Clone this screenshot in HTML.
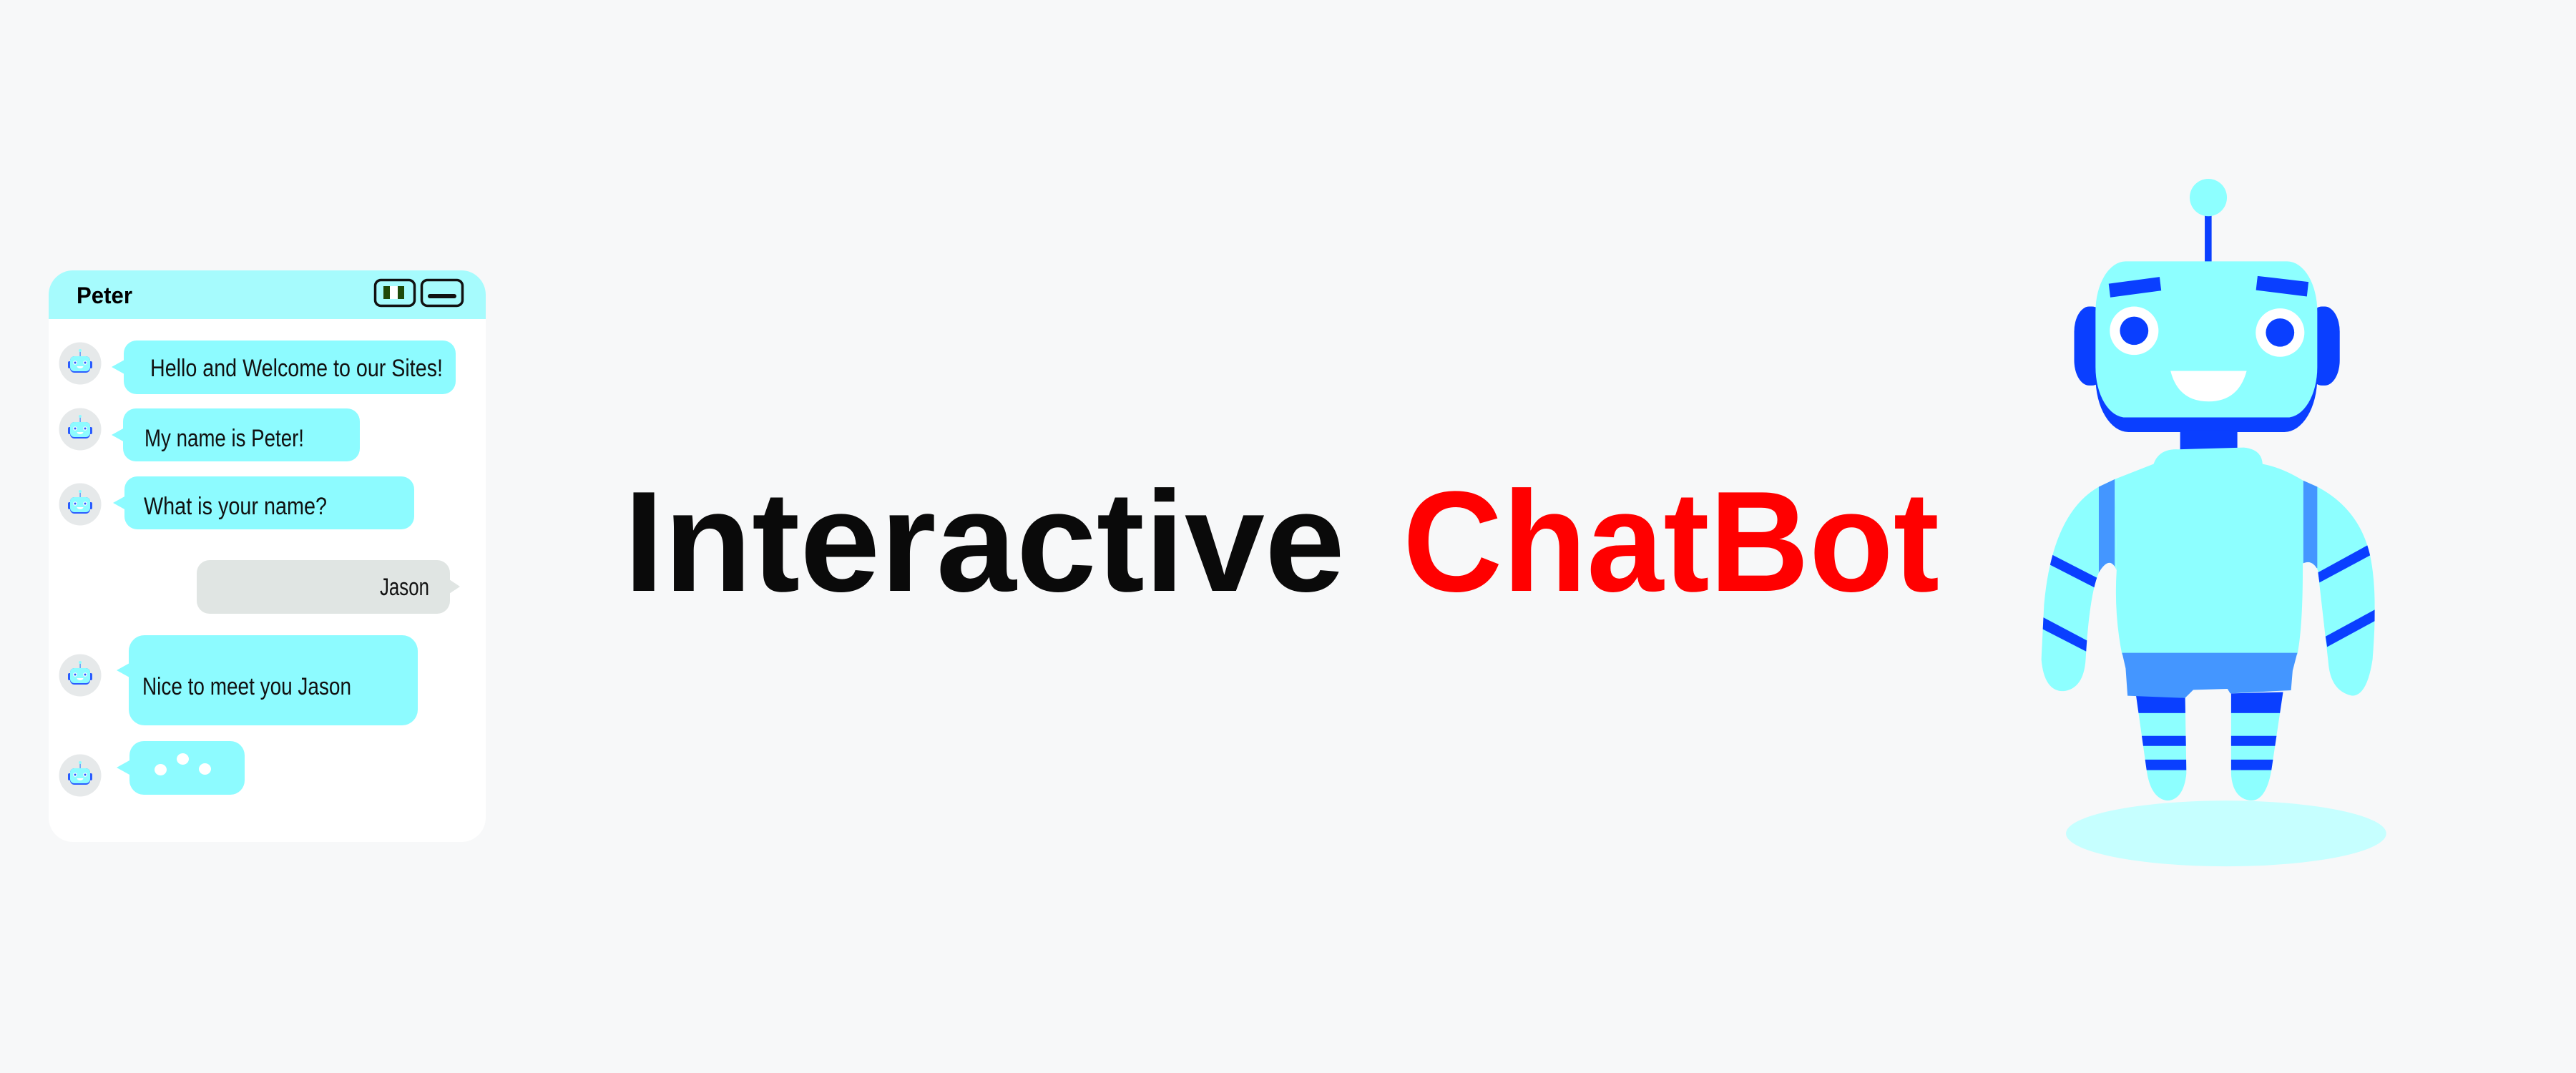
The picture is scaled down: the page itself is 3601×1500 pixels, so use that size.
<!DOCTYPE html>
<html><head><meta charset="utf-8">
<style>
html,body{margin:0;padding:0}
body{width:3601px;height:1500px;background:#f7f8f9;position:relative;overflow:hidden;font-family:"Liberation Sans",sans-serif}
.panel{position:absolute;left:68px;top:378px;width:611px;height:799px;background:#fff;border-radius:34px;overflow:hidden}
.hdr{position:absolute;left:0;top:0;width:611px;height:68px;background:#a6fbfd}
.av{position:absolute;left:82px;width:60px;height:60px}
.b{position:absolute;background:#8dfbff;border-radius:18px}
.tail{position:absolute;width:0;height:0;border-top:10px solid transparent;border-bottom:10px solid transparent}
.dot{position:absolute;width:17px;height:16px;border-radius:50%;background:#fff}
</style></head><body>

<div class="panel"><div class="hdr"></div></div>

<svg width="0" height="0" style="position:absolute">
<defs>
<symbol id="bot" viewBox="0 0 60 60">
  <ellipse cx="30" cy="30" rx="29.5" ry="29.5" fill="#e6e9ea"/>
  <rect x="29.5" y="12" width="1.2" height="8" fill="#3a8cff"/>
  <circle cx="30" cy="12" r="2" fill="#8dfbff"/>
  <rect x="13" y="27" width="5" height="10" rx="2" fill="#2a5cff"/>
  <rect x="42" y="27" width="5" height="10" rx="2" fill="#2a5cff"/>
  <rect x="16" y="20" width="28" height="23" rx="6" fill="#2a5cff"/>
  <rect x="16" y="20" width="28" height="21" rx="6" fill="#8dfbff"/>
  <circle cx="23" cy="29" r="2.8" fill="#fff"/><circle cx="23" cy="29" r="1.5" fill="#2a5cff"/>
  <circle cx="37" cy="29" r="2.8" fill="#fff"/><circle cx="37" cy="29" r="1.5" fill="#2a5cff"/>
  <path d="M25.5 34 h9 a4.5 3 0 0 1 -9 0z" fill="#fff"/>
</symbol>
</defs></svg>

<svg class="av" style="top:478px"><use href="#bot"/></svg>
<svg class="av" style="top:570px"><use href="#bot"/></svg>
<svg class="av" style="top:675px"><use href="#bot"/></svg>
<svg class="av" style="top:914px"><use href="#bot"/></svg>
<svg class="av" style="top:1054px"><use href="#bot"/></svg>

<div class="tail" style="left:156px;top:503px;border-right:18px solid #8dfbff"></div>
<div class="b" style="left:173px;top:476px;width:464px;height:75px"></div>
<div class="tail" style="left:156px;top:598px;border-right:18px solid #8dfbff"></div>
<div class="b" style="left:172px;top:571px;width:331px;height:74px"></div>
<div class="tail" style="left:158px;top:693px;border-right:18px solid #8dfbff"></div>
<div class="b" style="left:174px;top:666px;width:405px;height:74px"></div>
<div class="tail" style="left:628px;top:810px;border-left:15px solid #e0e5e3"></div>
<div class="b" style="left:275px;top:783px;width:354px;height:75px;background:#e0e5e3"></div>
<div class="tail" style="left:163px;top:927px;border-right:18px solid #8dfbff"></div>
<div class="b" style="left:180px;top:888px;width:404px;height:126px;border-radius:22px"></div>
<div class="tail" style="left:163px;top:1063px;border-right:18px solid #8dfbff"></div>
<div class="b" style="left:181px;top:1036px;width:161px;height:75px;border-radius:20px"></div>
<div class="dot" style="left:216px;top:1068px"></div>
<div class="dot" style="left:247px;top:1053px"></div>
<div class="dot" style="left:278px;top:1067px"></div>

<svg style="position:absolute;left:0;top:0" width="3601" height="1500">
  <!-- header -->
  <text x="107" y="424" font-family="Liberation Sans" font-weight="bold" font-size="32" fill="#000" textLength="78" lengthAdjust="spacingAndGlyphs">Peter</text>
  <rect x="524.5" y="391.5" width="55" height="36" rx="8" fill="none" stroke="#111" stroke-width="3.5"/>
  <rect x="536" y="400" width="9" height="18" fill="#1f4a0a"/>
  <rect x="545" y="400" width="11" height="18" fill="#fff"/>
  <rect x="556" y="400" width="9" height="18" fill="#1f4a0a"/>
  <rect x="589.5" y="391.5" width="57" height="36" rx="8" fill="none" stroke="#111" stroke-width="3.5"/>
  <line x1="601" y1="414" x2="635" y2="414" stroke="#111" stroke-width="6" stroke-linecap="round"/>
  <!-- messages -->
  <g font-family="Liberation Sans" font-size="34" fill="#111" lengthAdjust="spacingAndGlyphs">
    <text x="210" y="526" textLength="409" lengthAdjust="spacingAndGlyphs">Hello and Welcome to our Sites!</text>
    <text x="202" y="624" textLength="223" lengthAdjust="spacingAndGlyphs">My name is Peter!</text>
    <text x="201" y="719" textLength="256" lengthAdjust="spacingAndGlyphs">What is your name?</text>
    <text x="531" y="832" textLength="69" lengthAdjust="spacingAndGlyphs">Jason</text>
    <text x="199" y="971" textLength="292" lengthAdjust="spacingAndGlyphs">Nice to meet you Jason</text>
  </g>

  <text x="872" y="826" font-family="Liberation Sans" font-weight="bold" font-size="200" fill="#0a0a0a" textLength="1008" lengthAdjust="spacingAndGlyphs">Interactive</text>
  <text x="1961" y="826" font-family="Liberation Sans" font-weight="bold" font-size="200" fill="#ff0000" textLength="750" lengthAdjust="spacingAndGlyphs">ChatBot</text>

  <g transform="translate(2800,220) scale(0.3827,0.6378)">
    <defs>
      <clipPath id="la"><path d="M410,705 L350,722 Q180,780 150,980 L140,1100 Q150,1170 220,1170 Q295,1165 302,1100 Q315,960 350,910 Q390,870 415,905 Z"/></clipPath>
      <clipPath id="ra"><path d="M1095,708 L1148,722 Q1300,770 1340,870 Q1370,950 1350,1100 Q1330,1180 1275,1180 Q1195,1170 1188,1105 L1150,905 Q1130,880 1095,890 Z"/></clipPath>
      <clipPath id="ll"><path d="M485,1175 L665,1175 L670,1350 Q660,1408 600,1410 Q540,1405 525,1345 Z"/></clipPath>
      <clipPath id="rl"><path d="M833,1175 L1023,1172 L980,1345 Q960,1410 905,1410 Q838,1405 833,1350 Z"/></clipPath>
    </defs>
    <ellipse cx="815" cy="1482" rx="585" ry="72" fill="#c6ffff"/>
    <rect x="737" y="120" width="25" height="110" fill="#0a3fff"/>
    <ellipse cx="750" cy="88" rx="68" ry="41" fill="#8dffff"/>
    <rect x="260" y="327" width="120" height="173" rx="55" fill="#0a3fff"/>
    <rect x="1110" y="327" width="120" height="173" rx="55" fill="#0a3fff"/>
    <rect x="338" y="260" width="810" height="342" rx="120" fill="#0a3fff"/>
    <rect x="338" y="228" width="810" height="342" rx="110" fill="#8dffff"/>
    <polygon points="386,277 572,262 578,292 392,307" fill="#0a3fff"/>
    <polygon points="930,260 1116,273 1110,305 924,291" fill="#0a3fff"/>
    <ellipse cx="479" cy="380" rx="89" ry="53" fill="#fff"/>
    <ellipse cx="479" cy="380" rx="52" ry="31" fill="#0a3fff"/>
    <ellipse cx="1012" cy="384" rx="89" ry="53" fill="#fff"/>
    <ellipse cx="1012" cy="384" rx="52" ry="31" fill="#0a3fff"/>
    <path d="M612,468 L890,468 Q860,535 751,535 Q640,535 612,468 Z" fill="#fff"/>
    <rect x="647" y="598" width="209" height="45" fill="#0a3fff"/>
    <g clip-path="url(#la)">
      <rect x="100" y="690" width="330" height="500" fill="#8dffff"/>
      <rect x="350" y="700" width="58" height="220" fill="#4496ff"/>
      <polygon points="170,868 345,922 338,944 162,890" fill="#0a3fff"/>
      <polygon points="140,1006 310,1060 304,1083 132,1030" fill="#0a3fff"/>
    </g>
    <g clip-path="url(#ra)">
      <rect x="1090" y="690" width="300" height="500" fill="#8dffff"/>
      <rect x="1097" y="700" width="51" height="200" fill="#4496ff"/>
      <polygon points="1150,910 1332,850 1342,872 1156,932" fill="#0a3fff"/>
      <polygon points="1178,1050 1362,990 1368,1013 1184,1073" fill="#0a3fff"/>
    </g>
    <g clip-path="url(#ll)">
      <rect x="470" y="1170" width="210" height="250" fill="#8dffff"/>
      <rect x="470" y="1170" width="210" height="48" fill="#0a3fff"/>
      <rect x="470" y="1268" width="210" height="22" fill="#0a3fff"/>
      <rect x="470" y="1320" width="210" height="23" fill="#0a3fff"/>
    </g>
    <g clip-path="url(#rl)">
      <rect x="825" y="1165" width="210" height="250" fill="#8dffff"/>
      <rect x="825" y="1165" width="210" height="53" fill="#0a3fff"/>
      <rect x="825" y="1268" width="210" height="22" fill="#0a3fff"/>
      <rect x="825" y="1320" width="210" height="23" fill="#0a3fff"/>
    </g>
    <path d="M410,705 L550,672 Q570,638 640,640 L880,636 Q945,640 948,672 Q1020,680 1095,708 L1095,900 Q1095,1030 1075,1090 L435,1090 Q405,1000 415,905 Z" fill="#8dffff"/>
    <path d="M435,1086 L1075,1086 L1058,1125 L1052,1168 L830,1175 L820,1165 L695,1167 L665,1185 L455,1180 L448,1120 Z" fill="#4496ff"/>
  </g>
</svg>
</body></html>
